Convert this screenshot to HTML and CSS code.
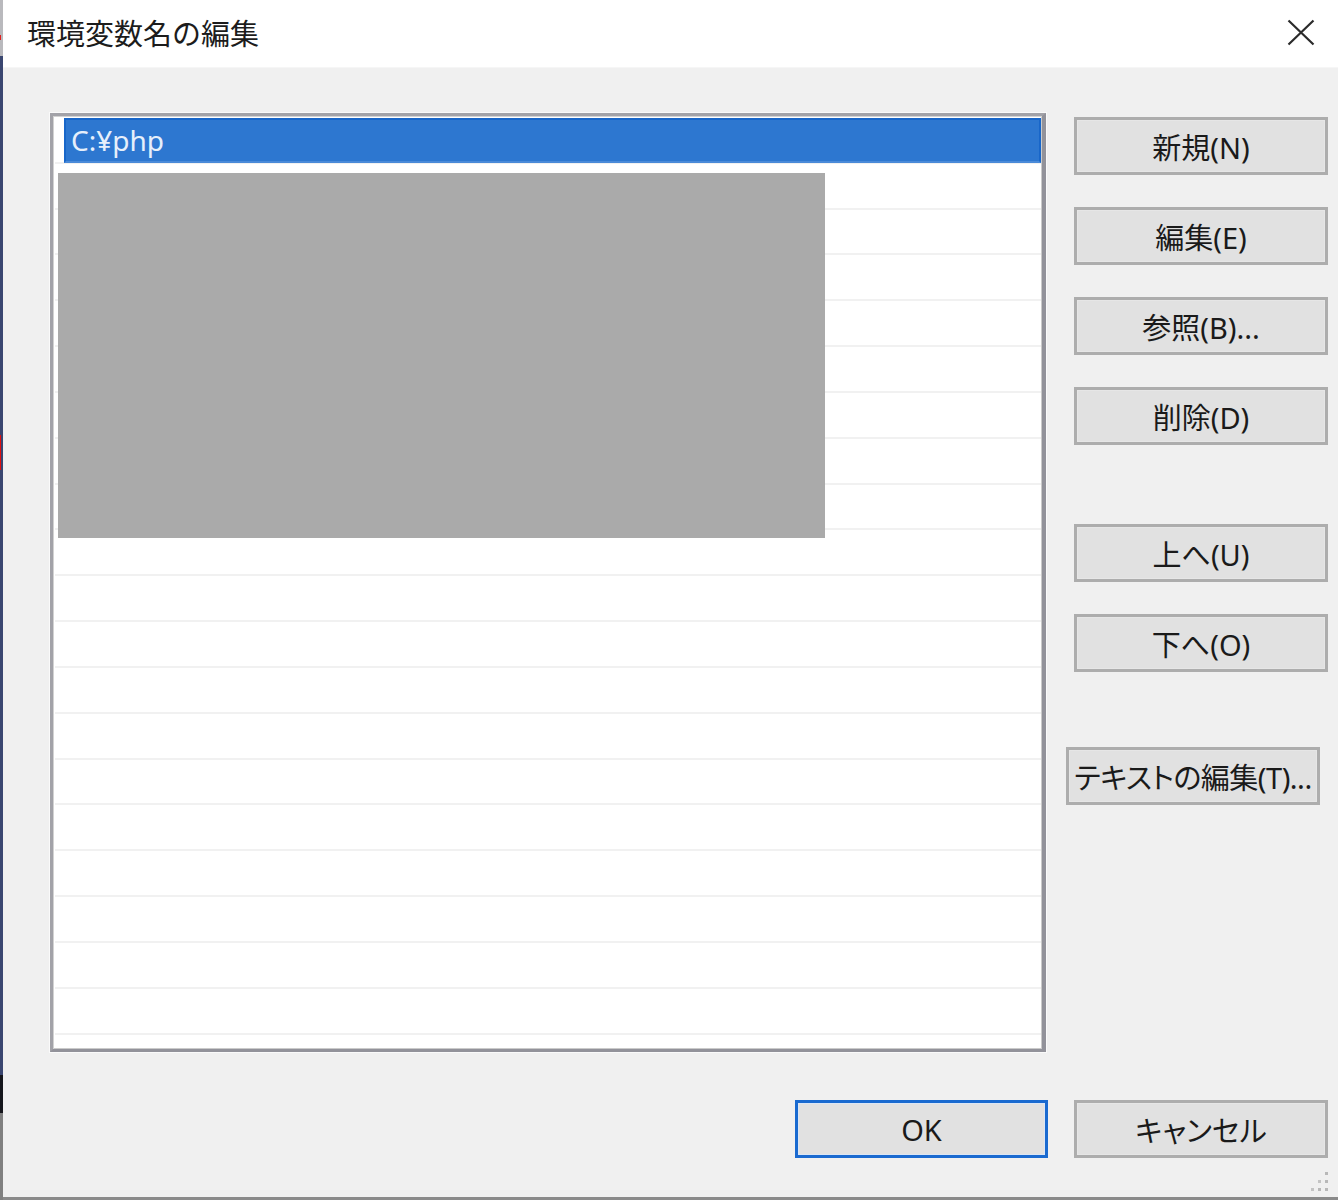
FILE: index.html
```html
<!DOCTYPE html>
<html lang="ja">
<head>
<meta charset="utf-8">
<title>環境変数名の編集</title>
<link rel="stylesheet" href="styles.css">
</head>
<body>
<div class="screen">
  <div class="edge"></div>
  <div class="window">
    <div class="titlebar">
      <span class="title">環境変数名の編集</span>
      <svg class="close" width="28" height="27" viewBox="0 0 28 27" aria-hidden="true">
        <path d="M1.5 1.5 L26.5 25.5 M26.5 1.5 L1.5 25.5" stroke="#2b2b2b" stroke-width="2.2" fill="none"/>
      </svg>
    </div>
    <div class="main">
      <div class="list">
        <div class="row"><div class="sel">C:¥php</div></div>
        <div class="row"></div>
        <div class="row"></div>
        <div class="row"></div>
        <div class="row"></div>
        <div class="row"></div>
        <div class="row"></div>
        <div class="row"></div>
        <div class="row"></div>
        <div class="row"></div>
        <div class="row"></div>
        <div class="row"></div>
        <div class="row"></div>
        <div class="row"></div>
        <div class="row"></div>
        <div class="row"></div>
        <div class="row"></div>
        <div class="row"></div>
        <div class="row"></div>
        <div class="row"></div>
        <div class="redact"></div>
      </div>
      <div class="actions">
        <button class="btn">新規(N)</button>
        <button class="btn">編集(E)</button>
        <button class="btn">参照(B)...</button>
        <button class="btn">削除(D)</button>
        <button class="btn group">上へ(U)</button>
        <button class="btn">下へ(O)</button>
        <button class="btn group2 shifted">テキストの編集(T)...</button>
      </div>
    </div>
    <div class="footer">
      <button class="btn ok">OK</button>
      <button class="btn">キャンセル</button>
    </div>
    <svg class="grip" width="24" height="22" viewBox="0 0 24 22" aria-hidden="true">
      <rect x="17" y="1" width="3" height="3" fill="#b8b8b8"/>
      <rect x="10" y="9" width="3" height="3" fill="#c4c4c4"/>
      <rect x="17" y="9" width="3" height="3" fill="#b8b8b8"/>
      <rect x="3" y="17" width="3" height="3" fill="#c4c4c4"/>
      <rect x="10" y="17" width="3" height="3" fill="#b8b8b8"/>
      <rect x="17" y="17" width="3" height="3" fill="#b8b8b8"/>
    </svg>
  </div>
</div>
</body>
</html>
```

FILE: styles.css
```css
* { box-sizing: border-box; }

html, body {
  margin: 0;
  padding: 0;
  background: #ffffff;
}

body {
  font-family: "Noto Sans", "Noto Sans CJK JP", sans-serif;
  color: #1a1a1a;
}

.screen {
  display: flex;
  width: 1338px;
  height: 1200px;
  overflow: hidden;
}

.edge {
  width: 3px;
  flex: none;
  height: 1200px;
  background:
    linear-gradient(to bottom, transparent 0 35px, #e02020 35px 40px, transparent 40px 435px, #e01010 435px 470px, transparent 470px) 0 0 / 1px 100% no-repeat,
    linear-gradient(to bottom, #b9b9bd 0 56px, #3a4670 56px 1075px, #15161c 1075px 1113px, #808080 1113px 1200px);
}

.window {
  position: relative;
  flex: 1;
  height: 1200px;
  background: #f0f0f0;
  border-bottom: 3px solid #8a8a8a;
  display: flex;
  flex-direction: column;
}

.titlebar {
  height: 68px;
  flex: none;
  background: #ffffff;
  border-bottom: 1px solid #f6f6f6;
  display: flex;
  align-items: center;
  justify-content: space-between;
  padding: 0 23px 0 24px;
}

.title {
  font-family: "Noto Sans CJK JP", sans-serif;
  font-size: 29px;
  color: #1c1c1c;
  line-height: 1;
  margin-top: -3px;
}

.close {
  display: block;
  margin-top: -2px;
}

.main {
  display: flex;
  align-items: flex-start;
  padding: 45px 0 0 47px;
  gap: 28px;
}

.list {
  position: relative;
  width: 996px;
  height: 939px;
  flex: none;
  background: #ffffff;
  border-style: solid;
  border-width: 3px 4px 3px 3px;
  border-color: #a2a2a8 #92929a #92929a #a2a2a8;
  box-shadow: inset 1px 1px 0 #d2d2d2, inset -1px -1px 0 #cacaca, 0 0 0 1px #fafafa;
  padding: 2px 1px 0 2px;
  overflow: hidden;
}

.row {
  height: 45.84px;
  border-bottom: 2px solid #f1f1f1;
}

.sel {
  margin-left: 9px;
  height: 45px;
  background: #2d77d0;
  border: 2px solid #1866c9;
  border-bottom-color: #4a8ad8;
  color: #e6effb;
  font-size: 28px;
  line-height: 41px;
  padding-left: 5px;
  font-family: "Noto Sans", "Noto Sans CJK JP", sans-serif;
}

.redact {
  position: absolute;
  left: 5px;
  top: 57px;
  width: 767px;
  height: 365px;
  background: #aaaaaa;
}

.actions {
  width: 254px;
  flex: none;
  display: flex;
  flex-direction: column;
  padding-top: 4px;
}

.btn {
  display: flex;
  align-items: center;
  justify-content: center;
  width: 254px;
  height: 58px;
  margin: 0;
  padding: 0;
  background: #e1e1e1;
  border: 3px solid #adadad;
  box-shadow: inset 0 0 0 1px #e6e6e6;
  font-family: "Noto Sans", "Noto Sans CJK JP", sans-serif;
  font-size: 29px;
  color: #1a1a1a;
  white-space: nowrap;
  font-feature-settings: "palt";
}

.actions .btn + .btn {
  margin-top: 32px;
}

.actions .btn.group {
  margin-top: 79px;
}

.actions .btn.group2 {
  margin-top: 75px;
}

.shifted {
  margin-left: -8px;
  letter-spacing: -0.5px;
}

.footer {
  display: flex;
  justify-content: flex-end;
  gap: 26px;
  padding: 0 10px 0 0;
  margin-top: 48px;
}

.ok {
  width: 253px;
  border: 3px solid #1a6ad0;
  box-shadow: inset 0 0 0 1px #dbe6f5;
}

.grip {
  position: absolute;
  right: 6px;
  bottom: 4px;
  display: block;
}
```
